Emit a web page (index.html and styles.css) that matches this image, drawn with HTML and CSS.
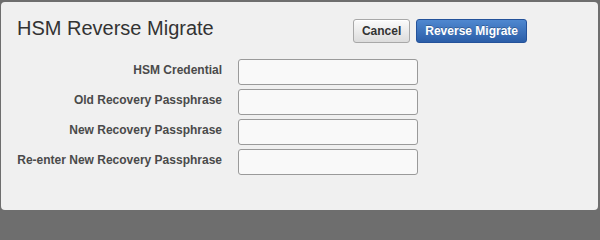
FILE: index.html
```html
<!DOCTYPE html>
<html>
<head>
<meta charset="utf-8">
<link rel="stylesheet" href="styles.css">
</head>
<body>
<div class="dialog">
  <div class="header">
    <h1 class="title">HSM Reverse Migrate</h1>
    <div class="actions">
      <button class="btn btn-default">Cancel</button>
      <button class="btn btn-primary">Reverse Migrate</button>
    </div>
  </div>
  <form class="form">
    <label class="label" for="f1">HSM Credential</label>
    <input class="field" id="f1" type="password">
    <label class="label" for="f2">Old Recovery Passphrase</label>
    <input class="field" id="f2" type="password">
    <label class="label" for="f3">New Recovery Passphrase</label>
    <input class="field" id="f3" type="password">
    <label class="label" for="f4">Re-enter New Recovery Passphrase</label>
    <input class="field" id="f4" type="password">
  </form>
</div>
</body>
</html>
```

FILE: styles.css
```css
html, body {
  margin: 0;
  padding: 0;
}
body {
  background: #6e6e6e;
  width: 600px;
  height: 214px;
  overflow: hidden;
  font-family: "Liberation Sans", Arial, sans-serif;
}
.dialog {
  box-sizing: border-box;
  margin: 2px 2px 0 1px;
  height: 208px;
  background: #f0f0f0;
  border-radius: 4px;
  padding: 14px 16px 0 16px;
}
.header {
  display: flex;
  align-items: flex-start;
  justify-content: space-between;
  padding-right: 55px;
}
.title {
  margin: 0;
  font-weight: normal;
  font-size: 20px;
  line-height: 24px;
  color: #333;
}
.actions {
  display: flex;
  gap: 6px;
  margin-top: 3px;
}
.btn {
  box-sizing: border-box;
  height: 24px;
  padding: 0 8px;
  font-family: "Liberation Sans", Arial, sans-serif;
  font-weight: bold;
  font-size: 12px;
  border-radius: 3px;
  cursor: pointer;
}
.btn-default {
  color: #333;
  border: 1px solid #a8a8a8;
  background: linear-gradient(#fbfbfb, #dcdcdc);
  box-shadow: inset 0 1px 0 #fff;
}
.btn-primary {
  color: #fff;
  border: 1px solid #24529a;
  background: linear-gradient(#4f88d0, #2b5ea8);
  text-shadow: 0 -1px 0 rgba(0,0,0,0.25);
}
.form {
  display: grid;
  grid-template-columns: 205px 180px;
  column-gap: 16px;
  row-gap: 4px;
  margin-top: 16px;
  align-items: start;
}
.label {
  text-align: right;
  font-weight: bold;
  font-size: 12px;
  line-height: 14px;
  padding-top: 4px;
  color: #4a4a4a;
  white-space: nowrap;
}
.field {
  box-sizing: border-box;
  width: 180px;
  height: 26px;
  margin: 0;
  border: 1px solid #9a9a9a;
  border-radius: 3px;
  background: #f9f9f9;
  padding: 2px 5px;
}
```
